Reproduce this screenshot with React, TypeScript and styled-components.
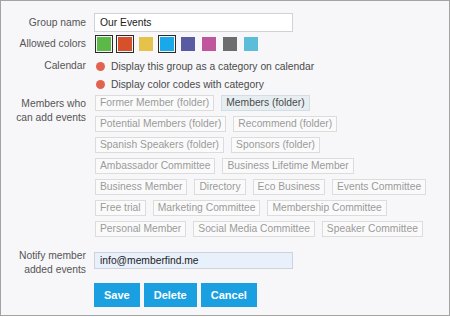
import React, { useState } from 'react';
import styled, { createGlobalStyle } from 'styled-components';

const GlobalStyle = createGlobalStyle`
  html, body {
    margin: 0;
    padding: 0;
    background: #ffffff;
  }
  body {
    font-family: "Liberation Sans", Arial, sans-serif;
  }
`;

const COLORS = ['#5cb947', '#d5502b', '#e5c34b', '#19a9ea', '#585aa2', '#c1559d', '#6d6d71', '#5cbdd9'];

const GROUPS = [
  ['Former Member (folder)', 'Members (folder)'],
  ['Potential Members (folder)', 'Recommend (folder)'],
  ['Spanish Speakers (folder)', 'Sponsors (folder)'],
  ['Ambassador Committee', 'Business Lifetime Member'],
  ['Business Member', 'Directory', 'Eco Business', 'Events Committee'],
  ['Free trial', 'Marketing Committee', 'Membership Committee'],
  ['Personal Member', 'Social Media Committee', 'Speaker Committee'],
];

const App = () => {
  const [selectedColors, setSelectedColors] = useState<number[]>([0, 1, 3]);
  const [selectedGroups, setSelectedGroups] = useState<string[]>(['Members (folder)']);

  const toggleColor = (i: number) =>
    setSelectedColors(prev => (prev.includes(i) ? prev.filter(c => c !== i) : [...prev, i]));

  const toggleGroup = (g: string) =>
    setSelectedGroups(prev => (prev.includes(g) ? prev.filter(x => x !== g) : [...prev, g]));

  return (
    <>
      <GlobalStyle />
      <Frame>
        <FieldRow>
          <Label>Group name</Label>
          <TextInput defaultValue="Our Events" />
        </FieldRow>

        <FieldRow gapTop={3}>
          <Label>Allowed colors</Label>
          <Swatches>
            {COLORS.map((c, i) => (
              <Swatch key={c} selected={selectedColors.includes(i)} onClick={() => toggleColor(i)}>
                <SwatchFill color={c} />
              </Swatch>
            ))}
          </Swatches>
        </FieldRow>

        <FieldRow gapTop={4} top>
          <Label>Calendar</Label>
          <Options>
            <Option>
              <Dot />
              Display this group as a category on calendar
            </Option>
            <Option>
              <Dot />
              Display color codes with category
            </Option>
          </Options>
        </FieldRow>

        <FieldRow gapTop={2} top>
          <Label multi>
            Members who
            <br />
            can add events
          </Label>
          <Tags>
            {GROUPS.map((row, ri) => (
              <TagRow key={ri}>
                {row.map(g => (
                  <Tag key={g} active={selectedGroups.includes(g)} onClick={() => toggleGroup(g)}>
                    {g}
                  </Tag>
                ))}
              </TagRow>
            ))}
          </Tags>
        </FieldRow>

        <FieldRow gapTop={10} top>
          <Label multi>
            Notify member
            <br />
            added events
          </Label>
          <TextInput small filled defaultValue="info@memberfind.me" />
        </FieldRow>

        <FieldRow gapTop={6}>
          <span />
          <Buttons>
            <Button>Save</Button>
            <Button>Delete</Button>
            <Button>Cancel</Button>
          </Buttons>
        </FieldRow>
      </Frame>
    </>
  );
};

const Frame = styled.div`
  box-sizing: border-box;
  width: 450px;
  height: 316px;
  border: 1px solid #a3a3a3;
  background: #f7f7f9;
  padding: 12px 0 0 0;
  display: flex;
  flex-direction: column;
  font-size: 10.3px;
  color: #555;
`;

const FieldRow = styled.div<{ gapTop?: number; top?: boolean }>`
  display: grid;
  grid-template-columns: 85px 1fr;
  column-gap: 8px;
  align-items: ${p => (p.top ? 'start' : 'center')};
  margin-top: ${p => p.gapTop || 0}px;
`;

const Label = styled.div<{ multi?: boolean }>`
  text-align: right;
  color: #555;
  line-height: ${p => (p.multi ? '14px' : '18px')};
  padding-top: ${p => (p.multi ? '2px' : '0')};
  white-space: nowrap;
`;

const TextInput = styled.input<{ small?: boolean; filled?: boolean }>`
  box-sizing: border-box;
  width: 199px;
  height: ${p => (p.small ? '17px' : '19px')};
  margin-top: ${p => (p.small ? '5px' : '0')};
  border: 1px solid #cfd3d8;
  background: ${p => (p.filled ? '#e8f0fb' : '#ffffff')};
  padding: 0 5px;
  font-family: "Liberation Sans", Arial, sans-serif;
  font-size: 10.3px;
  color: #222;
  outline: none;
`;

const Swatches = styled.div`
  display: flex;
  gap: 3px;
  margin-left: 1px;
`;

const Swatch = styled.div<{ selected: boolean }>`
  box-sizing: border-box;
  width: 18px;
  height: 18px;
  padding: 1px;
  border: 1px solid ${p => (p.selected ? '#2a2a2a' : 'transparent')};
  background: ${p => (p.selected ? '#f4f4f4' : 'transparent')};
  cursor: pointer;
`;

const SwatchFill = styled.div<{ color: string }>`
  width: 14px;
  height: 14px;
  background: ${p => p.color};
`;

const Options = styled.div`
  display: flex;
  flex-direction: column;
  margin-left: 2px;
`;

const Option = styled.div`
  display: flex;
  align-items: center;
  gap: 6px;
  height: 18px;
  color: #4a4a4a;
`;

const Dot = styled.span`
  width: 9px;
  height: 9px;
  border-radius: 50%;
  background: #e2624f;
  flex-shrink: 0;
`;

const Tags = styled.div`
  display: flex;
  flex-direction: column;
  gap: 5px;
  margin-left: 1px;
`;

const TagRow = styled.div`
  display: flex;
  gap: 7px;
`;

const Tag = styled.div<{ active: boolean }>`
  box-sizing: border-box;
  height: 16px;
  line-height: 14px;
  padding: 0 4px;
  border: 1px solid ${p => (p.active ? '#d4dde3' : '#dcdcdc')};
  background: ${p => (p.active ? '#e7eef2' : '#fafafb')};
  color: ${p => (p.active ? '#4a4a4a' : '#9a9a9a')};
  white-space: nowrap;
  cursor: pointer;
`;

const Buttons = styled.div`
  display: flex;
  gap: 4px;
`;

const Button = styled.button`
  height: 24px;
  padding: 0 10px;
  border: none;
  background: #1a9fe0;
  color: #ffffff;
  font-family: "Liberation Sans", Arial, sans-serif;
  font-weight: bold;
  font-size: 11px;
  cursor: pointer;
`;

export default App;
